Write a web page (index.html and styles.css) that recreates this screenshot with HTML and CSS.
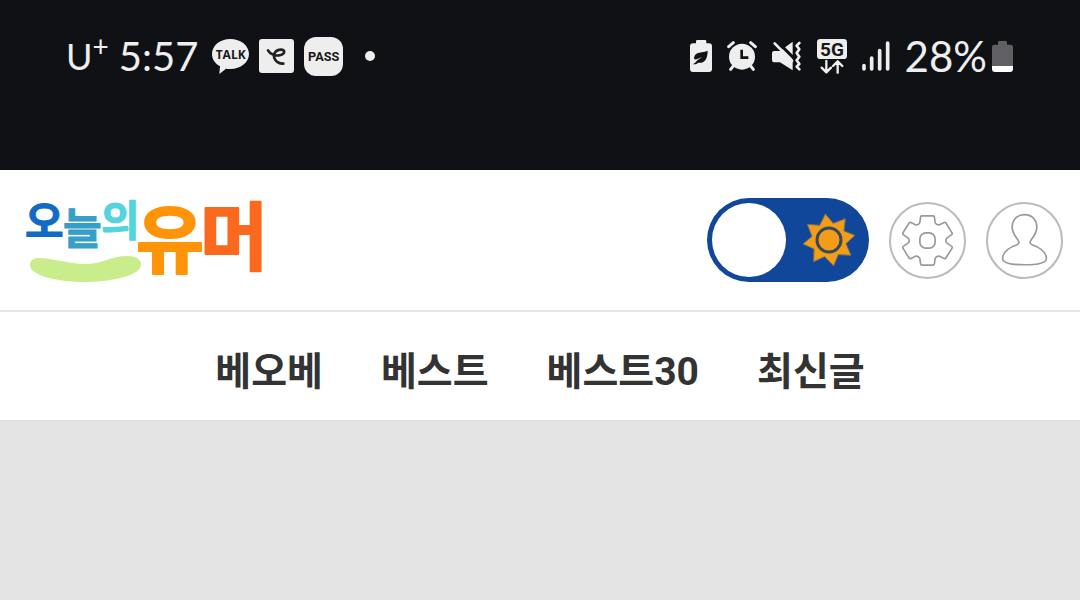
FILE: index.html
```
<!DOCTYPE html>
<html lang="ko">

<head>
  <meta charset="UTF-8">
  <meta name="viewport" content="width=device-width, initial-scale=1.0">
  <title>오늘의유머</title>
  <link rel="stylesheet" href="styles.css">
</head>

<body>
  <!-- Status Bar -->
  <div class="status-bar">
    <div class="status-group">
      <span class="carrier">U<sup>+</sup></span>
      <span class="clock">5:57</span>
      <svg class="notice" width="37" height="35" viewBox="0 0 111 105">
        <path fill="#eee" d="M55 0C86 0 111 20 111 45S86 90 55 90Q48 90 42 89L22 105L24 82C9 74 0 60 0 45C0 20 24 0 55 0Z" />
        <text x="56" y="59" class="talk-text">TALK</text>
      </svg>
      <svg class="notice" width="35" height="34" viewBox="0 0 105 102">
        <rect width="105" height="102" rx="9" fill="#eee" />
        <path class="script-mark" d="M27 34C34 47 50 52 65 48C78 44 80 32 66 32C50 32 42 45 46 57C50 68 60 74 73 74" />
      </svg>
      <svg class="notice" width="39" height="39" viewBox="0 0 117 117">
        <rect width="117" height="117" rx="36" fill="#eee" />
        <text x="59" y="72" class="pass-text">PASS</text>
      </svg>
      <span class="more-dot"></span>
    </div>
    <div class="status-group status-right">
      <svg width="22" height="32" viewBox="0 0 66 96">
        <path fill="#eee" d="M18 10V4Q18 0 22 0H45Q49 0 49 4V10H57Q66 10 66 19V87Q66 96 57 96H9Q0 96 0 87V19Q0 10 9 10Z" />
        <path fill="#101115" d="M53 32C53 57 43 71 25 68L18 73H8Q16 69 23 60L37 51L20 58Q9 60 13 50C17 34 38 39 53 32Z" />
      </svg>
      <svg width="30" height="30" viewBox="0 0 90 90">
        <circle cx="45" cy="47" r="39" fill="#eee" />
        <path class="line" stroke-width="9" d="M5 17L19 5M71 5L85 17M18 76L11 85M72 76L79 85" />
        <path fill="none" stroke="#101115" stroke-width="8" d="M44 26V50H64" />
      </svg>
      <svg width="30" height="30" viewBox="0 0 90 90">
        <path fill="#eee" d="M6 30H24L62 2V88L24 64H6Q0 64 0 57V37Q0 30 6 30Z" />
        <path stroke="#101115" stroke-width="9" d="M12 -2L70 56" />
        <path class="line" stroke-width="8" d="M8 7L60 60" />
        <path class="line" stroke-width="8" d="M82 6L74 14L82 25L74 36L82 47L74 58L82 69L74 77L82 85" />
      </svg>
      <svg width="30" height="35" viewBox="0 0 90 105">
        <rect width="90" height="60" rx="10" fill="#eee" />
        <text x="45" y="50" class="network-text">5G</text>
        <path class="line" stroke-width="7" d="M28 66V99M14 86L28 100L42 86M62 101V68M48 81L62 67L76 81" />
      </svg>
      <svg width="28" height="30" viewBox="0 0 84 90">
        <path class="line" stroke-width="11" d="M6 74V84M29 51V84M53 29V84M77 6V84" />
      </svg>
      <span class="battery">
        28%
        <svg width="21" height="31" viewBox="0 0 63 93">
          <path fill="#606062" d="M18 11V4Q18 0 22 0H41Q45 0 45 4V11H56Q63 11 63 18V76H0V18Q0 11 7 11Z" />
          <path fill="#fff" d="M0 75H63V84Q63 93 54 93H9Q0 93 0 84Z" />
        </svg>
      </span>
    </div>
  </div>

  <!-- Header -->
  <header class="header">
    <a class="logo" href="#" aria-label="오늘의유머">
      <svg width="240" height="84" viewBox="0 0 240 84">
        <path fill="#c9ed8b" d="M12 60C28 60 42 66 59 66C77 66 85 58 101 58C111 58 116 62 115 68C113 78 83 84 59 84C33 84 4 78 4 67C4 63 7 60 12 60Z" />
        <text class="logo-small logo-blue" x="-1" y="39">오</text>
        <text class="logo-small logo-teal" x="37" y="46">늘</text>
        <text class="logo-small logo-cyan" x="75" y="38">의</text>
        <text class="logo-large logo-orange" x="110" y="69">유</text>
        <text class="logo-large logo-red" x="174" y="66">머</text>
      </svg>
    </a>
    <div class="tools">
      <label class="theme-toggle">
        <input type="checkbox" aria-label="야간 모드">
        <span class="knob"></span>
        <svg width="54" height="54" viewBox="-81 -81 162 162">
          <path class="sun" d="M-11-78L13-50L49-64L45-27L78-14L51 11L66 46L28 44L14 78L-13 50L-46 65L-45 27L-78 12L-51-11L-65-47L-28-44Z" />
          <circle class="sun-ring" r="36" />
        </svg>
      </label>
      <button class="round-button" type="button" aria-label="설정">
        <svg viewBox="-110 -110 220 220">
          <path d="M-17-74H17Q21-74 21-70L23-54Q27-46 35-47L50-54Q54-56 56-52L74-23Q76-19 72-17L58-7Q52 0 58 7L72 17Q76 19 74 23L56 52Q54 56 50 54L35 47Q27 46 23 54L21 70Q21 74 17 74H-17Q-21 74-21 70L-23 54Q-27 46-35 47L-50 54Q-54 56-56 52L-74 23Q-76 19-72 17L-58 7Q-52 0-58-7L-72-17Q-76-19-74-23L-56-52Q-54-56-50-54L-35-47Q-27-46-23-54L-21-70Q-21-74-17-74Z" />
          <rect x="-23" y="-23" width="46" height="46" rx="18" />
        </svg>
      </button>
      <button class="round-button" type="button" aria-label="내 정보">
        <svg viewBox="-110 -110 220 220">
          <path d="M0-78C-24-78-38-60-37-38C-36-18-22-8-18 2Q-14 8-23 13C-45 21-66 34-66 54C-66 68-36 73 0 73C36 73 66 68 66 54C66 34 45 21 23 13Q14 8 18 2C22-8 36-18 37-38C38-60 24-78 0-78Z" />
        </svg>
      </button>
    </div>
  </header>

  <!-- Navigation -->
  <nav class="navigation">
    <a href="#">베오베</a>
    <a href="#">베스트</a>
    <a href="#">베스트30</a>
    <a href="#">최신글</a>
  </nav>

  <main class="content"></main>
</body>

</html>
```
FILE: styles.css
```
/* Color Variables */
:root {
  --status-background: #101115;
  --status-color: #eee;
  --toggle-color: #10479b;
  --line-color: #e4e4e4;
  --text-color: #333;
}

/* Reset Styles */
* {
  margin: 0;
  padding: 0;
  box-sizing: border-box;
}

body {
  font-family: Roboto, "Noto Sans CJK KR", sans-serif;
  background: #fff;
  color: var(--text-color);
  min-height: 100vh;
  display: flex;
  flex-direction: column;
}

svg {
  display: block;
  flex-shrink: 0;
}

/* Status Bar Styles */
.status-bar {
  display: flex;
  justify-content: space-between;
  padding: 32px 67px 90px 66px;
  background: var(--status-background);
  color: var(--status-color);
  font-family: Lato, sans-serif;
  font-size: 40px;
  line-height: 48px;
}

.status-group {
  display: flex;
  align-items: center;
  gap: 10px;
}

.status-right {
  gap: 15px;
}

.carrier {
  font-size: 36px;
}

.carrier sup {
  font-size: 28px;
  line-height: 0;
}

.clock {
  margin-right: 4px;
}

.more-dot {
  width: 10px;
  height: 10px;
  margin-left: 12px;
  border-radius: 50%;
  background: var(--status-color);
}

.battery {
  display: flex;
  align-items: center;
  gap: 5px;
  font-size: 42px;
}

.line {
  fill: none;
  stroke: var(--status-color);
  stroke-linecap: round;
  stroke-linejoin: round;
}

.script-mark {
  fill: none;
  stroke: #222;
  stroke-width: 8;
  stroke-linecap: round;
}

.talk-text,
.pass-text,
.network-text {
  fill: #17181b;
  font-weight: 700;
  text-anchor: middle;
}

.talk-text {
  font-family: "Open Sans", sans-serif;
  font-size: 36px;
}

.pass-text {
  font-family: Roboto, sans-serif;
  font-size: 38px;
}

.network-text {
  font-family: Roboto, sans-serif;
  font-size: 57px;
}

/* Header Styles */
.header {
  display: flex;
  align-items: center;
  justify-content: space-between;
  padding: 28px 17px 28px 26px;
  border-bottom: 2px solid var(--line-color);
}

.tools {
  display: flex;
  align-items: center;
  gap: 20px;
}

/* Logo Styles */
.logo svg {
  overflow: visible;
}

.logo text {
  font-family: "Noto Sans CJK KR", sans-serif;
  font-weight: 700;
  stroke-linejoin: round;
}

.logo-small {
  font-size: 42px;
  stroke-width: 1;
}

.logo-large {
  font-size: 74px;
  stroke-width: 2;
}

.logo-blue {
  fill: #116bc6;
  stroke: #116bc6;
}

.logo-teal {
  fill: #359fc8;
  stroke: #359fc8;
}

.logo-cyan {
  fill: #55d4df;
  stroke: #55d4df;
}

.logo-orange {
  fill: #ff9408;
  stroke: #ff9408;
}

.logo-red {
  fill: #fb691f;
  stroke: #fb691f;
}

/* Theme Toggle Styles */
.theme-toggle {
  position: relative;
  display: flex;
  align-items: center;
  justify-content: space-between;
  width: 162px;
  height: 84px;
  padding: 0 13px 0 5px;
  border-radius: 42px;
  background: var(--toggle-color);
  cursor: pointer;
}

.theme-toggle input {
  position: absolute;
  inset: 0;
  appearance: none;
  cursor: pointer;
}

.knob {
  width: 74px;
  height: 74px;
  border-radius: 50%;
  background: #fff;
}

.sun {
  fill: #f39c17;
  stroke: #756f58;
  stroke-width: 3;
  stroke-linejoin: round;
}

.sun-ring {
  fill: none;
  stroke: #34495a;
  stroke-width: 9;
}

/* Round Button Styles */
.round-button {
  width: 77px;
  height: 77px;
  border: 2px solid #bbb;
  border-radius: 50%;
  background: #fff;
  cursor: pointer;
}

.round-button svg {
  width: 100%;
  fill: none;
  stroke: #999;
  stroke-width: 5;
}

/* Navigation Styles */
.navigation {
  display: flex;
  justify-content: center;
  gap: 58px;
  padding: 36px 0 24px;
}

.navigation a {
  color: var(--text-color);
  font-size: 39px;
  font-weight: 700;
  line-height: 48px;
  text-decoration: none;
}

/* Content Styles */
.content {
  flex: 1;
  border-top: 1px solid #ddd;
  background: var(--line-color);
}
```
